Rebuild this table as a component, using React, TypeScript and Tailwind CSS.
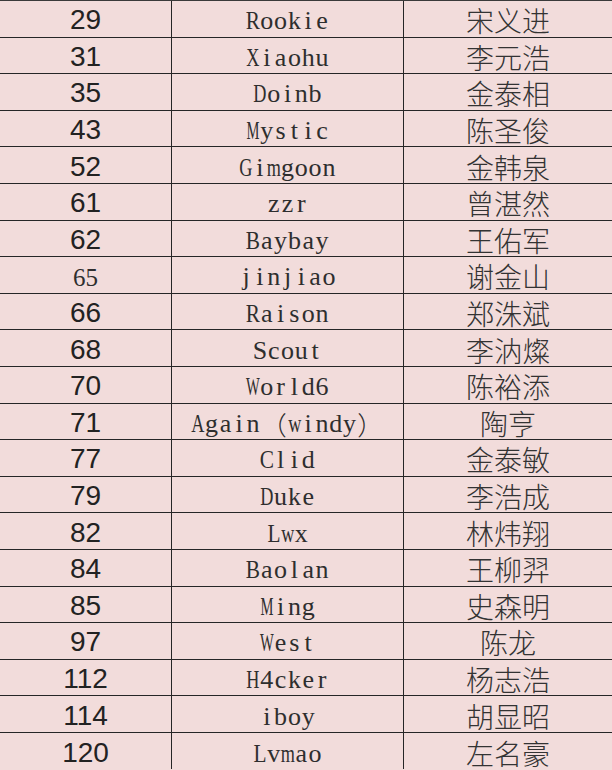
import React from 'react';

// Player list: jersey number, ID, real name
interface Player {
    num: string;
    id: string;
    name: string;
    serifNum?: boolean;
}

const PLAYERS: Player[] = [
    { num: '29', id: 'Rookie', name: '宋义进' },
    { num: '31', id: 'Xiaohu', name: '李元浩' },
    { num: '35', id: 'Doinb', name: '金泰相' },
    { num: '43', id: 'Mystic', name: '陈圣俊' },
    { num: '52', id: 'Gimgoon', name: '金韩泉' },
    { num: '61', id: 'zzr', name: '曾湛然' },
    { num: '62', id: 'Baybay', name: '王佑军' },
    { num: '65', id: 'jinjiao', name: '谢金山', serifNum: true },
    { num: '66', id: 'Raison', name: '郑洙斌' },
    { num: '68', id: 'Scout', name: '李汭燦' },
    { num: '70', id: 'World6', name: '陈裕添' },
    { num: '71', id: 'Again（windy）', name: '陶亨' },
    { num: '77', id: 'Clid', name: '金泰敏' },
    { num: '79', id: 'Duke', name: '李浩成' },
    { num: '82', id: 'Lwx', name: '林炜翔' },
    { num: '84', id: 'Baolan', name: '王柳羿' },
    { num: '85', id: 'Ming', name: '史森明' },
    { num: '97', id: 'West', name: '陈龙' },
    { num: '112', id: 'H4cker', name: '杨志浩' },
    { num: '114', id: 'iboy', name: '胡显昭' },
    { num: '120', id: 'Lvmao', name: '左名豪' },
];

// wide Times glyphs get squeezed into the half-width cell
const squeeze = (ch: string) => {
    if ('MW'.includes(ch)) return 'scale-x-[0.56]';
    if ('mwHDXGAOU'.includes(ch)) return 'scale-x-[0.7]';
    if ('RCBLKNV'.includes(ch)) return 'scale-x-[0.82]';
    return '';
};

// Serif glyphs laid out on a fixed grid, like SimSun's half-width latin
const MonoSerif = ({ text }: { text: string }) => (
    <span className="flex font-['Liberation_Serif','Noto_Sans_CJK_SC',serif] text-[26px] leading-none text-[#2e2e2e]">
        {Array.from(text).map((ch, i) =>
            ch.charCodeAt(0) > 0xff ? (
                <span key={i} className="w-[27.6px] text-center font-['Noto_Sans_CJK_SC',sans-serif] font-light">
                    {ch}
                </span>
            ) : (
                <span key={i} className={`w-[13.8px] flex justify-center ${squeeze(ch)}`}>
                    {ch}
                </span>
            ),
        )}
    </span>
);

const App = () => {
    return (
        <div className="w-[612px] h-[770px] overflow-hidden bg-[#f2dcdb] border-t border-[#3a3a3a]">
            {PLAYERS.map((p) => (
                <div
                    key={p.num}
                    className="flex h-[36.6px] border-b-[1.5px] last:border-b-0 border-[#262626] text-[#222]"
                >
                    <div className="w-[172px] shrink-0 flex items-center justify-center pt-[3px] border-r-[1.5px] border-[#262626]">
                        {p.serifNum ? (
                            <span className="font-['Liberation_Serif',serif] text-[25px] leading-none text-[#2e2e2e] pt-[3px]">
                                {p.num}
                            </span>
                        ) : (
                            <span className="font-['Liberation_Sans',sans-serif] text-[28px] leading-none">
                                {p.num}
                            </span>
                        )}
                    </div>
                    <div className="w-[232px] shrink-0 flex items-center justify-center pt-[5px] border-r-[1.5px] border-[#262626]">
                        <MonoSerif text={p.id} />
                    </div>
                    <div className="flex-1 flex items-center justify-center pt-[3px]">
                        <span className="font-['Noto_Sans_CJK_SC',sans-serif] font-light text-[28px] leading-none text-[#333]">
                            {p.name}
                        </span>
                    </div>
                </div>
            ))}
        </div>
    );
};

export default App;
